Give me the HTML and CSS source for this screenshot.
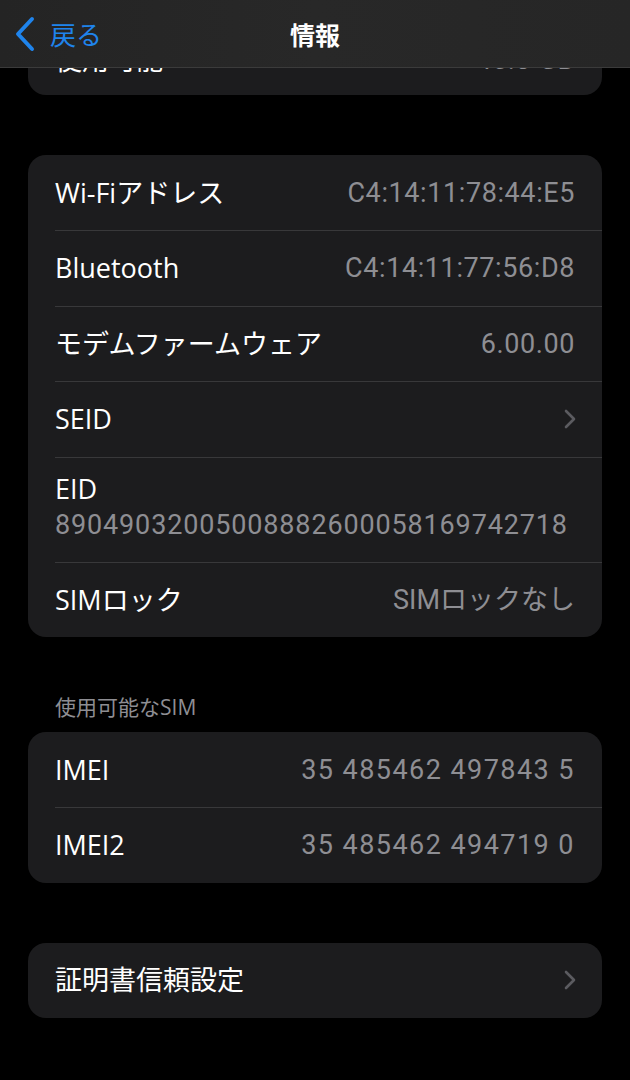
FILE: index.html
```html
<!DOCTYPE html>
<html lang="ja">
<head>
<meta charset="utf-8">
<title>情報</title>
<link rel="stylesheet" href="styles.css">
</head>
<body>
<div class="screen">
  <header class="nav">
    <div class="back">
      <svg class="back-icon" width="24" height="36" viewBox="0 0 24 36" aria-hidden="true">
        <polyline points="19,3 5,18 19,33" fill="none" stroke="#1f84ec" stroke-width="4" stroke-linecap="round" stroke-linejoin="round"/>
      </svg>
      <span class="back-label">戻る</span>
    </div>
    <h1 class="title">情報</h1>
    <div class="spacer"></div>
  </header>

  <main class="content">
    <section class="card card-first">
      <div class="row row-partial">
        <span class="label">使用可能</span>
        <span class="value">45.3 GB</span>
      </div>
    </section>

    <section class="card card-gap">
      <div class="row">
        <span class="label">Wi-Fiアドレス</span>
        <span class="value">C4:14:11:78:44:E5</span>
      </div>
      <div class="row">
        <span class="label">Bluetooth</span>
        <span class="value">C4:14:11:77:56:D8</span>
      </div>
      <div class="row">
        <span class="label">モデムファームウェア</span>
        <span class="value">6.00.00</span>
      </div>
      <div class="row">
        <span class="label">SEID</span>
        <svg class="chevron" width="14" height="22" viewBox="0 0 14 22" aria-hidden="true">
          <polyline points="3,3 11,11 3,19" fill="none" stroke="#5b5b60" stroke-width="2.6" stroke-linecap="round" stroke-linejoin="round"/>
        </svg>
      </div>
      <div class="row row-stack">
        <span class="label">EID</span>
        <span class="value value-eid">89049032005008882600058169742718</span>
      </div>
      <div class="row">
        <span class="label">SIMロック</span>
        <span class="value value-text">SIMロックなし</span>
      </div>
    </section>

    <h2 class="section-header">使用可能なSIM</h2>
    <section class="card">
      <div class="row">
        <span class="label">IMEI</span>
        <span class="value value-imei">35 485462 497843 5</span>
      </div>
      <div class="row">
        <span class="label">IMEI2</span>
        <span class="value value-imei">35 485462 494719 0</span>
      </div>
    </section>

    <section class="card card-gap">
      <div class="row">
        <span class="label">証明書信頼設定</span>
        <svg class="chevron" width="14" height="22" viewBox="0 0 14 22" aria-hidden="true">
          <polyline points="3,3 11,11 3,19" fill="none" stroke="#5b5b60" stroke-width="2.6" stroke-linecap="round" stroke-linejoin="round"/>
        </svg>
      </div>
    </section>
  </main>
</div>
</body>
</html>
```

FILE: styles.css
```css
* {
  box-sizing: border-box;
}

html, body {
  margin: 0;
  padding: 0;
  background: #000;
}

body {
  width: 630px;
  height: 1080px;
  overflow: hidden;
  font-family: "Open Sans", "Noto Sans CJK JP", sans-serif;
  color: #fff;
}

.screen {
  position: relative;
  width: 630px;
  height: 1080px;
  overflow: hidden;
  background: #000;
}

/* Navigation bar (overlays scrolled content) */
.nav {
  position: absolute;
  top: 0;
  left: 0;
  right: 0;
  z-index: 10;
  height: 68px;
  display: grid;
  grid-template-columns: 1fr auto 1fr;
  align-items: center;
  background: linear-gradient(90deg, #242424 0%, #282828 50%, #262626 100%);
  border-bottom: 1px solid #3b3b3b;
}

.back {
  display: flex;
  align-items: center;
  gap: 13px;
  padding-left: 13px;
}

.back-icon {
  display: block;
}

.back-label {
  font-size: 26px;
  line-height: 30px;
  color: #1f84ec;
  font-family: "Noto Sans CJK JP", sans-serif;
}

.title {
  margin: 0;
  font-size: 25px;
  line-height: 30px;
  font-weight: 700;
  font-family: "Noto Sans CJK JP", sans-serif;
  color: #fff;
}

/* Content */
.content {
  padding: 0 28px;
  display: flex;
  flex-direction: column;
}

.card {
  background: #1c1c1e;
  border-radius: 18px;
  overflow: hidden;
}

.card-first {
  margin-top: 20px;
}

.card-gap {
  margin-top: 60px;
}

.row {
  display: flex;
  align-items: center;
  justify-content: space-between;
  height: 75px;
  margin-left: 27px;
  padding-right: 27px;
}

.row + .row {
  height: 75.5px;
  border-top: 1px solid #38383a;
}

.row-partial {
  padding-top: 5px;
}

.row.row-stack {
  flex-direction: column;
  align-items: flex-start;
  justify-content: flex-start;
  height: auto;
  padding-top: 13px;
  padding-bottom: 19px;
}

.row-stack .label,
.row-stack .value {
  line-height: 36px;
}

.label {
  font-size: 27px;
  line-height: 34px;
  color: #fff;
  white-space: nowrap;
}

.value {
  font-family: "Roboto", "Noto Sans CJK JP", sans-serif;
  font-size: 27px;
  line-height: 34px;
  color: #8e8e93;
  white-space: nowrap;
  letter-spacing: 0.6px;
}

.value-text {
  letter-spacing: 0;
}

.value-eid {
  letter-spacing: 0.85px;
}

.value-imei {
  letter-spacing: 1.45px;
}

.chevron {
  display: block;
  margin-right: -2px;
}

.section-header {
  margin: 56px 0 11px 27px;
  font-size: 21px;
  line-height: 28px;
  font-weight: 400;
  color: #8e8e93;
}
```
